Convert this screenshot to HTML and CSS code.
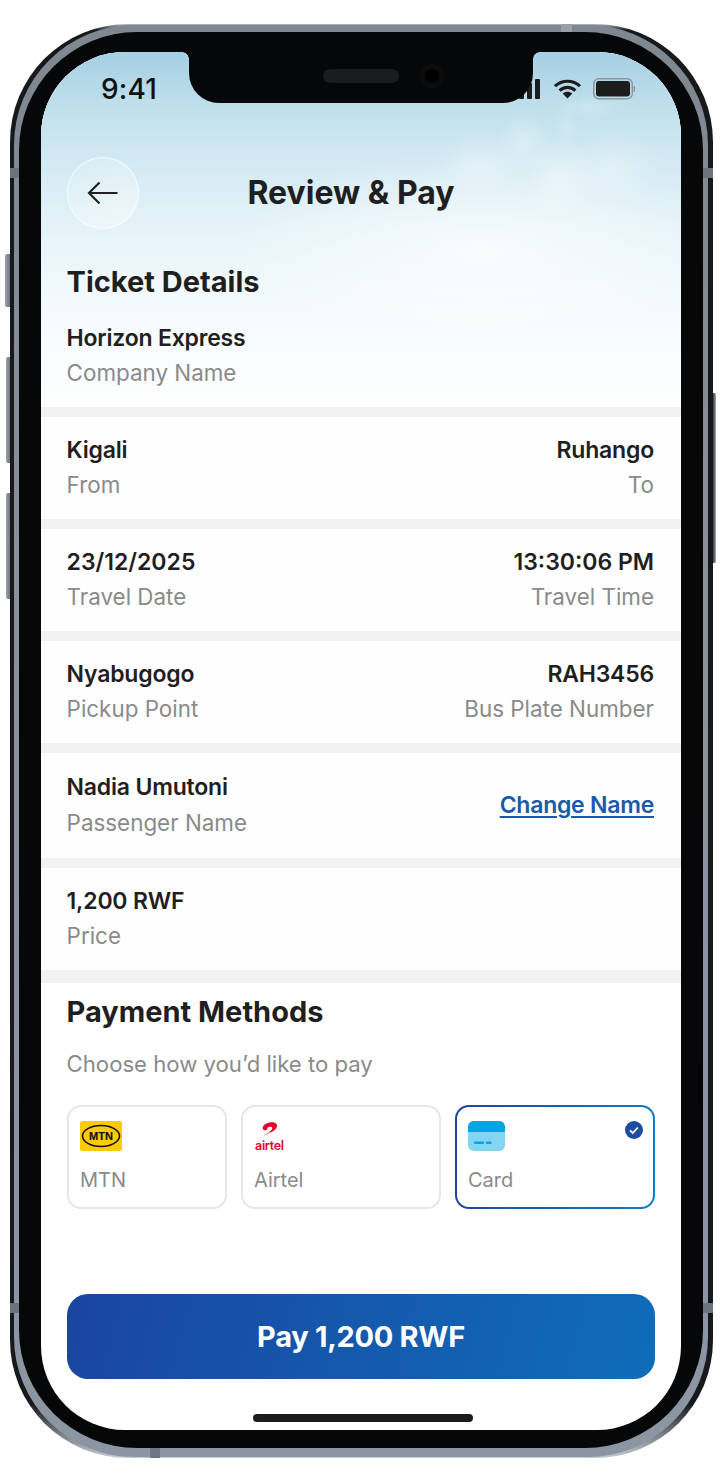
FILE: index.html
```html
<!DOCTYPE html>
<html lang="en">
<head>
<meta charset="utf-8">
<title>Review &amp; Pay</title>
<link rel="stylesheet" href="styles.css">
</head>
<body>
<div class="phone">
  <span class="btn btn-a"></span><span class="btn btn-b"></span><span class="btn btn-c"></span><span class="btn btn-r"></span>
  <div class="band">
    <span class="ant ant-lt"></span><span class="ant ant-rt"></span><span class="ant ant-lb"></span><span class="ant ant-rb"></span><span class="ant ant-top"></span><span class="ant ant-bot"></span>
    <div class="bezel">
      <div class="screen">
        <div class="notch">
          <span class="speaker"></span><span class="camera"></span>
        </div>
        <div class="list">
          <header class="sky">
            <div class="status">
              <span class="clock">9:41</span>
              <div class="status-icons">
                <svg class="signal" width="32" height="22" viewBox="0 0 32 22"><rect x="0" y="14" width="5" height="7" rx="1"/><rect x="9" y="10" width="5" height="11" rx="1"/><rect x="17" y="5" width="5" height="16" rx="1"/><rect x="25" y="1" width="5" height="20" rx="1"/></svg>
                <svg class="wifi" width="27" height="20" viewBox="0 0 27 20"><path d="M1 7.200C8 .6 19 .6 26 7.200" fill="none" stroke="#1c1c1c" stroke-width="3.200"/><path d="M5.600 11.600c4.600-4.200 11.200-4.200 15.800 0" fill="none" stroke="#1c1c1c" stroke-width="3.200"/><path d="M8.600 14.600c2.900-2.400 6.900-2.400 9.800 0L13.500 19.600z" fill="#1c1c1c"/></svg>
                <svg class="battery" width="42" height="22" viewBox="0 0 42 22"><rect x=".75" y=".75" width="38.500" height="20" rx="5" fill="none" stroke="#8d979f" stroke-width="1.500"/><rect x="3" y="3" width="34" height="15.500" rx="3" fill="#1c1c1c"/><rect x="40.500" y="8" width="1.500" height="6" rx=".7" fill="#8d979f"/></svg>
              </div>
            </div>
            <nav class="nav">
              <button class="back" aria-label="Back">
                <svg width="32" height="24" viewBox="0 0 32 24"><path d="M30.500 12H2M12.500 1.500 2 12l10.500 10.500" fill="none" stroke="#222" stroke-width="2.200"/></svg>
              </button>
              <h1 class="title">Review &amp; Pay</h1>
            </nav>
            <h2 class="heading">Ticket Details</h2>
            <div class="company">
              <div class="value">Horizon Express</div>
              <div class="label">Company Name</div>
            </div>
          </header>

          <section class="row">
            <div><div class="value">Kigali</div><div class="label">From</div></div>
            <div class="end"><div class="value">Ruhango</div><div class="label">To</div></div>
          </section>
          <section class="row">
            <div><div class="value value-num">23/12/2025</div><div class="label">Travel Date</div></div>
            <div class="end"><div class="value value-num">13:30:06 PM</div><div class="label">Travel Time</div></div>
          </section>
          <section class="row">
            <div><div class="value">Nyabugogo</div><div class="label">Pickup Point</div></div>
            <div class="end"><div class="value">RAH3456</div><div class="label">Bus Plate Number</div></div>
          </section>
          <section class="row row-tall">
            <div><div class="value">Nadia Umutoni</div><div class="label">Passenger Name</div></div>
            <a class="change" href="#">Change Name</a>
          </section>
          <section class="row">
            <div><div class="value">1,200 RWF</div><div class="label">Price</div></div>
          </section>
        </div>

        <section class="payment">
          <h2 class="heading">Payment Methods</h2>
          <p class="label choose">Choose how you’d like to pay</p>
          <div class="methods">
            <div class="method">
              <svg class="logo" width="42" height="30" viewBox="0 0 42 30"><rect width="42" height="30" rx="2.500" fill="#ffcb05"/><ellipse cx="21" cy="15" rx="18.500" ry="10.500" fill="none" stroke="#111" stroke-width="1.600"/><text x="21" y="19" text-anchor="middle" class="mtn-text">MTN</text></svg>
              <span class="method-name">MTN</span>
            </div>
            <div class="method">
              <svg class="logo logo-airtel" width="42" height="36" viewBox="0 0 42 36"><path d="M9 5.500C10.500 2.500 15 .8 19 1.200c3 .3 4.500 2 4 4.300-.6 2.800-4 5-7.500 6.300L10 14.500c2-1.500 5-3 7-5 1.500-1.500 1.700-3 .3-3.600-1.800-.7-4 .2-4.300 2-.1 .8-.6 1.600-2 1.400C9 9.500 8.300 7.300 9 5.500z" fill="#e4002b"/><text x="1" y="29" class="airtel-text">airtel</text></svg>
              <span class="method-name">Airtel</span>
            </div>
            <div class="method method-on">
              <svg class="logo" width="37" height="30" viewBox="0 0 37 30"><rect width="37" height="30" rx="6" fill="#84d4f3"/><path d="M0 11V6a6 6 0 0 1 6-6h25a6 6 0 0 1 6 6v5z" fill="#02a5e2"/><rect x="6" y="20.500" width="10" height="2.500" rx="1" fill="#02a5e2"/><rect x="18" y="20.500" width="5.500" height="2.500" rx="1" fill="#02a5e2"/></svg>
              <span class="method-name">Card</span>
              <svg class="tick" width="18" height="18" viewBox="0 0 18 18"><circle cx="9" cy="9" r="9" fill="#1b4ea3"/><path d="M5 9.300 7.800 12l5-5.500" fill="none" stroke="#fff" stroke-width="1.800"/></svg>
            </div>
          </div>
          <button class="pay">Pay 1,200 RWF</button>
          <div class="home"></div>
        </section>
      </div>
    </div>
  </div>
</div>
</body>
</html>
```

FILE: styles.css
```css
* { box-sizing: border-box; }
html, body { margin: 0; padding: 0; background: #fff; }
body { height: 1482px; overflow: hidden; font-family: Inter, "Liberation Sans", sans-serif; color: #1f1f1f; }

.phone {
  position: relative;
  width: 703px;
  height: 1434px;
  margin: 24px 0 0 10px;
  padding: 1px 5px 1px 4px;
  border-radius: 118px;
  background: linear-gradient(180deg, #b9bcc2 0, #17191d 6px, #17191d 1380px, #c4ccd3 1434px);
}
.band {
  position: relative;
  height: 100%;
  padding: 7px 5px 9px 5px;
  border-radius: 120px;
  background: linear-gradient(180deg, #7f8791 0, #8a929c 50%, #8c96a2 100%);
}
.bezel {
  height: 100%;
  padding: 20px 22px 19px 22px;
  border-radius: 118px;
  background: #060708;
}
.screen {
  position: relative;
  height: 1378px;
  border-radius: 84px;
  overflow: hidden;
  background: #fff;
}

.btn { position: absolute; background: linear-gradient(90deg, #9aa1a9, #6f7780); border-radius: 2px 0 0 2px; }
.btn-a { left: -5px; top: 230px; width: 5px; height: 53px; }
.btn-b { left: -4px; top: 333px; width: 4px; height: 106px; }
.btn-c { left: -4px; top: 469px; width: 4px; height: 106px; }
.btn-r { right: -3px; top: 369px; width: 3px; height: 170px; border-radius: 0 2px 2px 0; background: linear-gradient(90deg, #30343a, #a7adb4); }

.ant { position: absolute; background: #6b737d; }
.ant-lt { left: -4px; top: 143px; width: 9px; height: 10px; }
.ant-rt { right: -5px; top: 143px; width: 10px; height: 10px; }
.ant-lb { left: -4px; top: 1278px; width: 9px; height: 10px; }
.ant-rb { right: -5px; top: 1278px; width: 10px; height: 10px; }
.ant-top { left: 547px; top: -1px; width: 11px; height: 8px; background: #9aa0a7; }
.ant-bot { left: 136px; bottom: -1px; width: 10px; height: 10px; background: #6f7882; }

.notch {
  position: absolute;
  z-index: 2;
  top: 0;
  left: 148px;
  width: 344px;
  height: 51px;
  border-radius: 0 0 30px 30px;
  background: #060708;
}
.notch::before, .notch::after {
  content: "";
  position: absolute;
  top: 0;
  width: 7px;
  height: 7px;
}
.notch::before { left: -7px; background: radial-gradient(circle at 0 100%, transparent 6.500px, #060708 7.200px); }
.notch::after { right: -7px; background: radial-gradient(circle at 100% 100%, transparent 6.500px, #060708 7.200px); }
.speaker { position: absolute; left: 134px; top: 17px; width: 76px; height: 14px; border-radius: 7px; background: #1b1c1e; }
.camera { position: absolute; left: 236px; top: 17px; width: 14px; height: 14px; border-radius: 50%; background: #000; box-shadow: 0 0 0 5px #0b0c0f; }

.list { display: flex; flex-direction: column; gap: 10px; padding-bottom: 13px; background: #f2f2f2; }

.sky {
  height: 355px;
  padding: 0 26px 0 25.600px;
  background:
    radial-gradient(ellipse 28px 32px at 482px 92px, rgba(255,255,255,.3), transparent 100%),
    radial-gradient(ellipse 40px 34px at 439px 112px, rgba(255,255,255,.3), transparent 100%),
    radial-gradient(ellipse 36px 40px at 519px 125px, rgba(255,255,255,.38), transparent 100%),
    radial-gradient(ellipse 50px 36px at 572px 115px, rgba(255,255,255,.3), transparent 100%),
    radial-gradient(ellipse 12px 28px at 526px 72px, rgba(255,255,255,.18), transparent 100%),
    radial-gradient(ellipse 30px 12px at 550px 55px, rgba(255,255,255,.2), transparent 100%),
    radial-gradient(ellipse 250px 95px at 440px 195px, rgba(255,255,255,.65), transparent 100%),
    linear-gradient(180deg, #a4cfe4 0, #bddeeb 50px, #d0e8f2 100px, #e3f2f8 170px, #f2f9fc 240px, #fbfdfe 320px, #fefefe 355px);
}
.status { height: 105px; display: flex; justify-content: space-between; padding: 20px 20px 0 34.400px; }
.clock { font-size: 28px; font-weight: 500; line-height: 34px; color: #111; letter-spacing: .2px; }
.status-icons { display: flex; align-items: flex-start; gap: 12px; padding-top: 6px; }
.signal { fill: #1c1c1c; }
.wifi { margin-top: 1px; }

.nav { position: relative; height: 72px; display: flex; align-items: center; justify-content: center; margin-left: .4px; }
.back {
  position: absolute;
  left: 0;
  top: 0;
  width: 72px;
  height: 72px;
  padding: 0;
  display: flex;
  align-items: center;
  justify-content: center;
  border: 1px solid rgba(255,255,255,.75);
  border-radius: 50%;
  background: linear-gradient(135deg, rgba(255,255,255,.08), rgba(255,255,255,.45));
}
.title { margin: 0 20px 0 0; font-size: 32px; font-weight: 700; line-height: 40px; color: #1f1f1f; }
.heading { margin: 0; font-size: 29px; font-weight: 700; line-height: 36px; color: #1f1f1f; }
.sky .heading { margin-top: 35px; }
.company { margin-top: 21px; }

.value { font-size: 23px; font-weight: 600; line-height: 34px; letter-spacing: -.2px; color: #1f1f1f; }
.value-num { letter-spacing: 0; }
.label { margin-top: 1px; font-size: 22.400px; font-weight: 400; line-height: 34px; color: #8a8a8a; }

.row {
  display: flex;
  justify-content: space-between;
  align-items: center;
  height: 102px;
  padding: 0 27px 1px 25.600px;
  background: #fefefe;
}
.row-tall { height: 105px; }
.row-tall .label { margin-top: 2px; }
.end { text-align: right; }
.change { font-size: 23px; font-weight: 600; color: #1a5aaa; text-decoration: underline; text-underline-offset: 3px; letter-spacing: -.25px; }

.payment { padding: 11px 27px 0 25.600px; }
.choose { margin: 17px 0 0; font-size: 22.150px; }
.methods { display: grid; grid-template-columns: 160px 200px 200px; gap: 14px; margin: 24px 0 0 .4px; }
.method {
  position: relative;
  height: 104px;
  padding: 14px 11px 0;
  display: flex;
  flex-direction: column;
  align-items: flex-start;
  border: 2px solid #e6e6e6;
  border-radius: 14px;
  background: #fff;
}
.method-on {
  border-color: transparent;
  background: linear-gradient(#fff, #fff) padding-box, linear-gradient(90deg, #1c469f, #0f7cc8) border-box;
}
.logo { display: block; }
.logo-airtel { margin-bottom: -6px; }
.method-name { margin-top: 14px; font-size: 20px; line-height: 30px; color: #8a8a8a; }
.tick { position: absolute; top: 13.500px; right: 10px; }
.mtn-text { font-family: "Liberation Sans", sans-serif; font-size: 11px; font-weight: 700; fill: #111; stroke: #111; stroke-width: .2px; }
.airtel-text { font-family: Inter, sans-serif; font-size: 12.500px; font-weight: 600; fill: #e4002b; letter-spacing: -.3px; }

.pay {
  display: block;
  width: 588px;
  height: 85px;
  margin: 85px 0 0 .4px;
  border: 0;
  border-radius: 21px;
  background: linear-gradient(105deg, #1a459f 0, #0f6dba 100%);
  font-family: Inter, sans-serif;
  font-size: 29px;
  font-weight: 700;
  letter-spacing: -.3px;
  color: #fff;
}
.home { width: 220px; height: 8px; margin: 35px 0 0 186.400px; border-radius: 4px; background: #1c1c1c; }
```
